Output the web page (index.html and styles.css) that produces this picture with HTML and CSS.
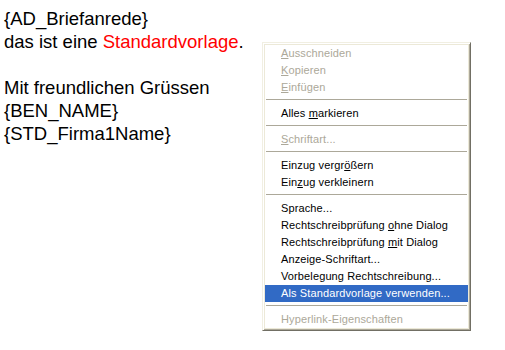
FILE: index.html
```html
<!DOCTYPE html>
<html lang="de">
<head>
<meta charset="utf-8">
<title>Standardvorlage</title>
<link rel="stylesheet" href="styles.css">
</head>
<body>
<div class="doc">
  <div class="line">{AD_Briefanrede}</div>
  <div class="line">das ist eine <span class="red">Standardvorlage</span>.</div>
  <div class="line">&nbsp;</div>
  <div class="line">Mit freundlichen Grüssen</div>
  <div class="line">{BEN_NAME}</div>
  <div class="line">{STD_Firma1Name}</div>
</div>
<div class="menu">
  <div class="item disabled"><u>A</u>usschneiden</div>
  <div class="item disabled"><u>K</u>opieren</div>
  <div class="item disabled"><u>E</u>infügen</div>
  <div class="sep"></div>
  <div class="item">Alles <u>m</u>arkieren</div>
  <div class="sep"></div>
  <div class="item disabled"><u>S</u>chriftart...</div>
  <div class="sep"></div>
  <div class="item">Einzug vergr<u>ö</u>ßern</div>
  <div class="item">Ein<u>z</u>ug verkleinern</div>
  <div class="sep"></div>
  <div class="item">Sprache...</div>
  <div class="item">Rechtschreibprüfung <u>o</u>hne Dialog</div>
  <div class="item">Rechtschreibprüfung <u>m</u>it Dialog</div>
  <div class="item">Anzeige-Schriftart...</div>
  <div class="item">Vorbelegung Rechtschreibung...</div>
  <div class="item selected">Als Standardvorlage verwenden...</div>
  <div class="sep"></div>
  <div class="item disabled">Hyperlink-Eigenschaften</div>
</div>
</body>
</html>
```
FILE: styles.css
```css
html, body {
  margin: 0;
  padding: 0;
  background: #ffffff;
}
body {
  width: 505px;
  height: 350px;
  overflow: hidden;
  position: relative;
}
.doc {
  padding: 7px 0 0 4px;
  font-family: "Liberation Sans", Arial, sans-serif;
  font-size: 18.5px;
  line-height: 23px;
  color: #000000;
}
.red {
  color: #ff0000;
}
.menu {
  position: absolute;
  left: 262px;
  top: 42px;
  width: 203px;
  border-style: solid;
  border-width: 1px;
  border-color: #f1efe2 #716f64 #716f64 #f1efe2;
  box-shadow: inset 1px 1px 0 #ffffff, inset -1px -1px 0 #aca899;
  padding: 2px;
  background: #ffffff;
  font-family: "Liberation Sans", Arial, sans-serif;
  font-size: 11px;
  letter-spacing: 0.12px;
  color: #000000;
}
.menu::before {
  content: "";
  position: absolute;
  left: 1px;
  top: 1px;
  right: 1px;
  bottom: 1px;
  border: 1px solid #ece9d8;
  pointer-events: none;
}
.item {
  height: 17px;
  line-height: 17px;
  padding-left: 16px;
  white-space: nowrap;
}
.item u {
  text-decoration: underline;
  text-underline-offset: 1px;
}
.disabled {
  color: #aca899;
}
.selected {
  background: #316ac5;
  color: #ffffff;
}
.sep {
  height: 1px;
  margin: 3px 1px 4px 1px;
  background: #aca899;
  border-bottom: 1px solid #ffffff;
}
```
